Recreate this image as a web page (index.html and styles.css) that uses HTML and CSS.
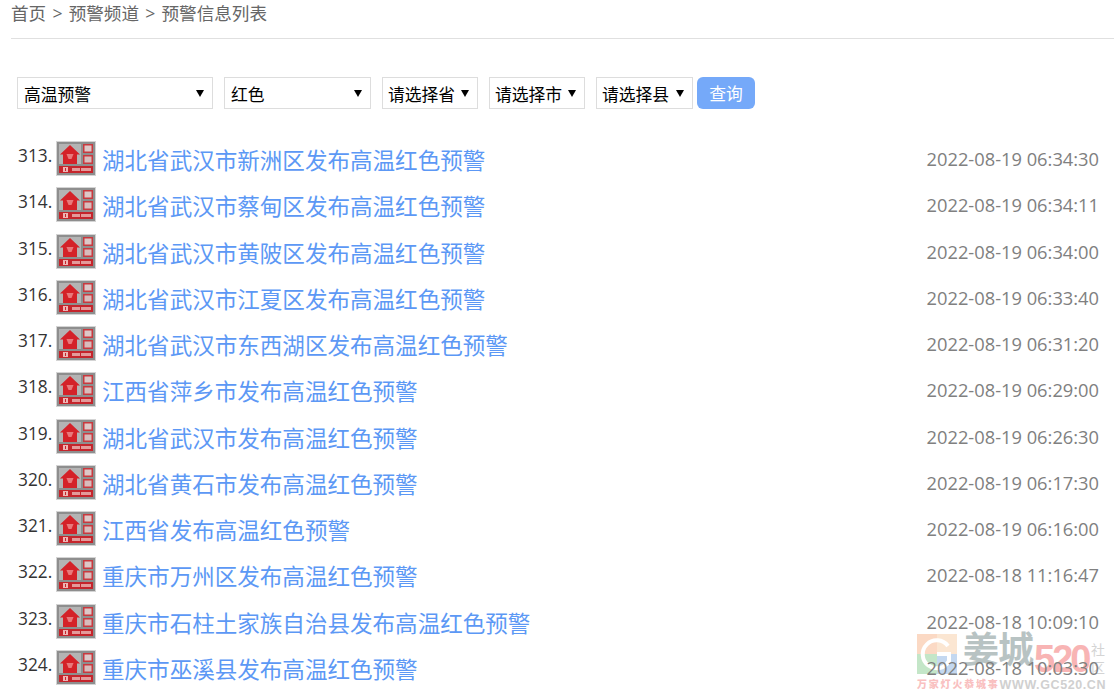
FILE: index.html
```html
<!DOCTYPE html>
<html lang="zh-CN">
<head>
<meta charset="utf-8">
<title>预警信息列表</title>
<link rel="stylesheet" href="styles.css">
</head>
<body>
<svg class="defs" width="0" height="0" aria-hidden="true">
  <symbol id="sign" viewBox="0 0 40 35">
    <rect x="0" y="0" width="40" height="35" fill="#d4d4d4"/>
    <rect x="1" y="1" width="38" height="33" fill="#8e8e8e"/>
    <rect x="3" y="3" width="22" height="20" fill="#b4b4b4"/>
    <path d="M14 4 L4 13.5 H7 V23 H21 V13.5 H24 Z" fill="#d42229"/>
    <path d="M10.5 13 H17.5 L15.5 18 H12.5 Z" fill="#e8797c"/>
    <rect x="27" y="3" width="10" height="9" fill="#c9393e"/>
    <rect x="28.5" y="4.5" width="7" height="6" fill="#dcc8c8"/>
    <rect x="27" y="14" width="10" height="9" fill="#c9393e"/>
    <rect x="28.5" y="15.5" width="7" height="6" fill="#d8bcbc"/>
    <rect x="3" y="25" width="34" height="7" fill="#c5252c"/>
    <rect x="7" y="26" width="5" height="5" fill="#eeb4b4"/>
    <rect x="9" y="27" width="1" height="3" fill="#c5252c"/>
    <rect x="16" y="27" width="19" height="3" fill="#e39a9a"/>
    <rect x="24" y="27" width="1" height="3" fill="#c5252c"/>
  </symbol>
</svg>
<nav class="crumbs"><span>首页</span><i>&gt;</i><span>预警频道</span><i>&gt;</i><span>预警信息列表</span></nav>
<form class="filters">
  <label class="pick w-type"><select><option>高温预警</option></select></label>
  <label class="pick w-level"><select><option>红色</option></select></label>
  <label class="pick w-area"><select><option>请选择省</option></select></label>
  <label class="pick w-area"><select><option>请选择市</option></select></label>
  <label class="pick w-area last"><select><option>请选择县</option></select></label>
  <button class="search" type="button">查询</button>
</form>
<ul class="alerts">
  <li><span class="no">313.</span><svg class="sign"><use href="#sign"/></svg><a href="#">湖北省武汉市新洲区发布高温红色预警</a><time>2022-08-19 06:34:30</time></li>
  <li><span class="no">314.</span><svg class="sign"><use href="#sign"/></svg><a href="#">湖北省武汉市蔡甸区发布高温红色预警</a><time>2022-08-19 06:34:11</time></li>
  <li><span class="no">315.</span><svg class="sign"><use href="#sign"/></svg><a href="#">湖北省武汉市黄陂区发布高温红色预警</a><time>2022-08-19 06:34:00</time></li>
  <li><span class="no">316.</span><svg class="sign"><use href="#sign"/></svg><a href="#">湖北省武汉市江夏区发布高温红色预警</a><time>2022-08-19 06:33:40</time></li>
  <li><span class="no">317.</span><svg class="sign"><use href="#sign"/></svg><a href="#">湖北省武汉市东西湖区发布高温红色预警</a><time>2022-08-19 06:31:20</time></li>
  <li><span class="no">318.</span><svg class="sign"><use href="#sign"/></svg><a href="#">江西省萍乡市发布高温红色预警</a><time>2022-08-19 06:29:00</time></li>
  <li><span class="no">319.</span><svg class="sign"><use href="#sign"/></svg><a href="#">湖北省武汉市发布高温红色预警</a><time>2022-08-19 06:26:30</time></li>
  <li><span class="no">320.</span><svg class="sign"><use href="#sign"/></svg><a href="#">湖北省黄石市发布高温红色预警</a><time>2022-08-19 06:17:30</time></li>
  <li><span class="no">321.</span><svg class="sign"><use href="#sign"/></svg><a href="#">江西省发布高温红色预警</a><time>2022-08-19 06:16:00</time></li>
  <li><span class="no">322.</span><svg class="sign"><use href="#sign"/></svg><a href="#">重庆市万州区发布高温红色预警</a><time>2022-08-18 11:16:47</time></li>
  <li><span class="no">323.</span><svg class="sign"><use href="#sign"/></svg><a href="#">重庆市石柱土家族自治县发布高温红色预警</a><time>2022-08-18 10:09:10</time></li>
  <li><span class="no">324.</span><svg class="sign"><use href="#sign"/></svg><a href="#">重庆市巫溪县发布高温红色预警</a><time>2022-08-18 10:03:30</time></li>
</ul>
<aside class="mark" aria-hidden="true">
  <svg class="mark-logo" viewBox="0 0 40 40" width="40" height="40">
    <rect x="0" y="0" width="20" height="20" fill="#fbd9c4"/>
    <rect x="20" y="0" width="20" height="20" fill="#fbe6d2"/>
    <rect x="0" y="20" width="20" height="20" fill="#c4e6c8"/>
    <rect x="20" y="20" width="20" height="20" fill="#c4d8f0"/>
    <path d="M31 12 A14 14 0 1 0 32 27 V20 H20" fill="none" stroke="#fff" stroke-width="4"/>
  </svg>
  <span class="mark-cn">姜城</span><span class="mark-num">520</span><span class="mark-she">社<br>区</span>
  <span class="mark-foot"><b>万家灯火恭城事</b><em>WWW.GC520.CN</em></span>
</aside>
</body>
</html>
```
FILE: styles.css
```css
* { box-sizing: border-box; }
html, body { margin: 0; padding: 0; }
body {
  width: 1114px;
  height: 696px;
  overflow: hidden;
  position: relative;
  background: #fff;
  color: #333;
  font-family: "Open Sans", "Noto Sans CJK SC", sans-serif;
}
.defs { position: absolute; }
.crumbs {
  margin-left: 11px;
  height: 39px;
  border-bottom: 1px solid #e0e0e0;
  display: flex;
  gap: 6.2px;
  font-size: 17.6px;
  line-height: 26px;
  color: #666;
}
.crumbs i { font-style: normal; }
.filters {
  display: flex;
  align-items: flex-start;
  margin: 38px 0 0 17px;
  height: 32px;
}
.pick { position: relative; display: block; margin-right: 11px; }
.pick::after {
  content: "";
  position: absolute;
  right: 9px;
  top: 13px;
  border: 4px solid transparent;
  border-top: 7px solid #000;
  border-bottom: 0;
}
.pick select {
  appearance: none;
  -webkit-appearance: none;
  display: block;
  width: 100%;
  height: 32px;
  padding: 1px 0 0 6px;
  border: 1px solid #ddd;
  border-radius: 0;
  background: #fff;
  color: #000;
  font: 16.8px "Noto Sans CJK SC", sans-serif;
}
.w-type { width: 196px; }
.w-level { width: 147px; }
.w-area { width: 96px; }
.w-area select { padding-left: 5px; }
.pick.last { width: 97px; margin-right: 4px; }
.search {
  width: 58px;
  height: 32px;
  border: 0;
  border-radius: 6px;
  background: #75a9f9;
  color: #fff;
  font: 16.8px "Noto Sans CJK SC", sans-serif;
}
.alerts { position: relative; z-index: 1; list-style: none; margin: 29px 0 0; padding: 0 15px 0 17px; }
.alerts li {
  height: 46.27px;
  display: flex;
  align-items: flex-start;
}
.no { width: 39px; padding-left: 1px; font-size: 17.3px; line-height: 24px; color: #333; margin-top: 6px; }
.sign { width: 40px; height: 35px; margin-top: 3px; flex: none; }
.alerts a {
  margin-left: 6px;
  font-size: 22.55px;
  line-height: 34px;
  margin-top: 6px;
  color: #5c98f5;
  text-decoration: none;
}
.alerts time {
  margin-left: auto;
  font-size: 18.3px;
  line-height: 26px;
  margin-top: 8px;
  color: #808080;
}
.mark {
  position: absolute;
  left: 917px;
  top: 630px;
  width: 197px;
  height: 66px;
  pointer-events: none;
  font-family: "Liberation Sans", "Noto Sans CJK SC", sans-serif;
}
.mark-logo { position: absolute; left: 0; top: 4px; }
.mark-cn { position: absolute; left: 46px; top: -4px; font-size: 36px; line-height: 50px; color: #b8c3c3; font-weight: 700; letter-spacing: -1px; white-space: nowrap; }
.mark-num { position: absolute; left: 117px; top: 7px; font-size: 38px; line-height: 44px; color: #f8b4b4; font-weight: 700; letter-spacing: -3px; }
.mark-she { position: absolute; left: 174px; top: 11px; font-size: 14px; line-height: 18px; color: #d4d4d4; }
.mark-foot { position: absolute; left: 0; top: 47px; width: 188px; display: flex; justify-content: space-between; font-size: 12.5px; line-height: 16px; font-weight: 700; color: #d0d0d0; white-space: nowrap; }
.mark-foot b { color: #f9c0c0; letter-spacing: 1.8px; font-size: 10px; }
.mark-foot em { font-style: normal; letter-spacing: .6px; }
```
